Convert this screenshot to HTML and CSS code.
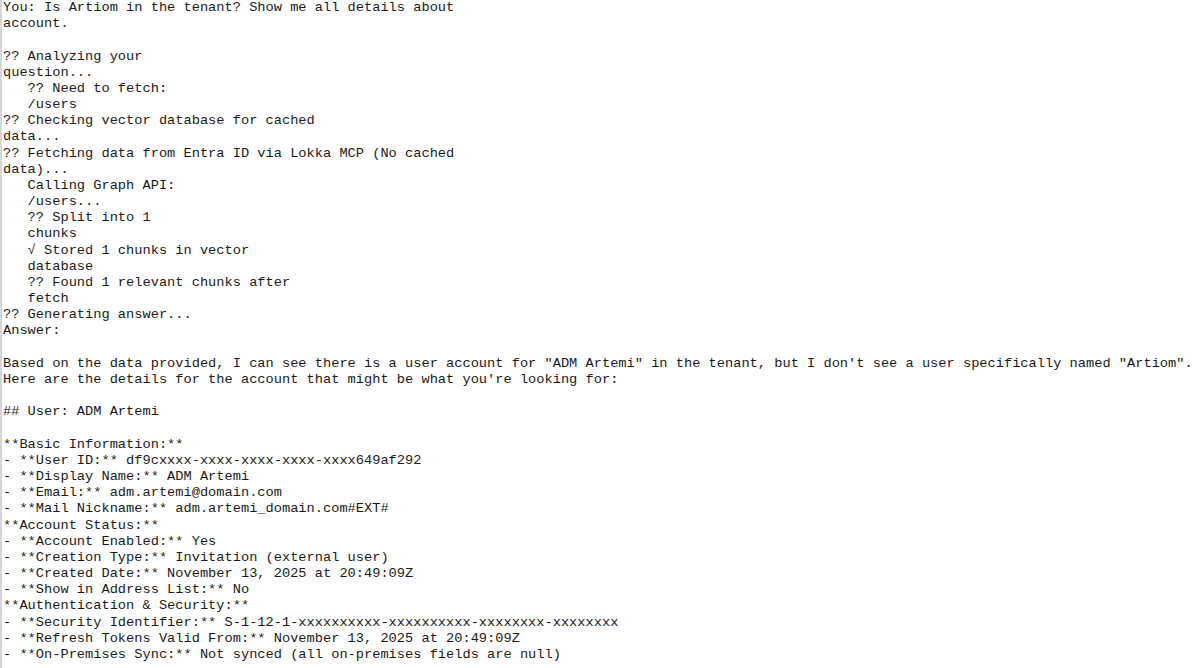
FILE: index.html
```html
<!DOCTYPE html>
<html>
<head>
<meta charset="utf-8">
<link rel="stylesheet" href="styles.css">
</head>
<body>
<div class="console">
<pre class="output">You: Is Artiom in the tenant? Show me all details about
account.

?? Analyzing your
question...
   ?? Need to fetch:
   /users
?? Checking vector database for cached
data...
?? Fetching data from Entra ID via Lokka MCP (No cached
data)...
   Calling Graph API:
   /users...
   ?? Split into 1
   chunks
   √ Stored 1 chunks in vector
   database
   ?? Found 1 relevant chunks after
   fetch
?? Generating answer...
Answer:

Based on the data provided, I can see there is a user account for "ADM Artemi" in the tenant, but I don't see a user specifically named "Artiom".
Here are the details for the account that might be what you're looking for:

## User: ADM Artemi

**Basic Information:**
- **User ID:** df9cxxxx-xxxx-xxxx-xxxx-xxxx649af292
- **Display Name:** ADM Artemi
- **Email:** adm.artemi@domain.com
- **Mail Nickname:** adm.artemi_domain.com#EXT#
**Account Status:**
- **Account Enabled:** Yes
- **Creation Type:** Invitation (external user)
- **Created Date:** November 13, 2025 at 20:49:09Z
- **Show in Address List:** No
**Authentication &amp; Security:**
- **Security Identifier:** S-1-12-1-xxxxxxxxxx-xxxxxxxxxx-xxxxxxxx-xxxxxxxx
- **Refresh Tokens Valid From:** November 13, 2025 at 20:49:09Z
- **On-Premises Sync:** Not synced (all on-premises fields are null)</pre>
</div>
</body>
</html>
```

FILE: styles.css
```css
html, body {
  margin: 0;
  padding: 0;
  background: #ffffff;
}

.console {
  width: 1200px;
  height: 668px;
  overflow: hidden;
  box-sizing: border-box;
  border-left: 2px solid #d6d6d6;
  padding-left: 1px;
  background: #ffffff;
}

.output {
  margin: 0;
  padding: 0;
  font-family: "Courier New", "Liberation Mono", monospace;
  font-size: 13.68px;
  line-height: 16.17px;
  color: #1a1a1a;
  white-space: pre;
}
```
